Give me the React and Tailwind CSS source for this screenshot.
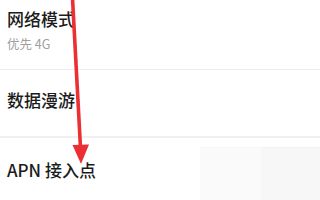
export default function App() {
  const font = { fontFamily: '"Noto Sans CJK SC", "Noto Sans", sans-serif' }
  return (
    <div className="relative w-[320px] h-[200px] overflow-hidden bg-white" style={font}>
      <div className="flex flex-col">
        <div className="h-[70px] border-b border-[#ececec] pl-[7px] pt-[9px]">
          <div className="text-[17px] leading-[20px] font-medium text-[#1c1c1c]">网络模式</div>
          <div className="mt-[7px] text-[12.5px] leading-[16px] text-[#a0a0a0]">优先 4G</div>
        </div>
        <div className="h-[68px] border-b-2 border-[#f0f0f0] pl-[7px] pt-[20px]">
          <div className="text-[17px] leading-[20px] font-medium text-[#1c1c1c]">数据漫游</div>
        </div>
        <div className="relative flex h-[62px] justify-between">
          <div className="pl-[7px] pt-[22px] text-[17px] leading-[20px] font-medium text-[#1c1c1c]">APN 接入点</div>
          <div className="mt-[9px] flex">
            <div className="w-[61px] h-[60px] bg-[#fafafa] border-t border-[#f6f6f6]" />
            <div className="w-[59px] h-[60px] bg-[#f7f7f7] border-t border-[#f3f3f3]" />
          </div>
        </div>
      </div>
      <svg className="absolute left-0 top-0" width="320" height="200" viewBox="0 0 320 200">
        <line x1="72.5" y1="-2" x2="80.5" y2="148" stroke="#ec2f35" strokeWidth="3.6" />
        <polygon points="72.5,145 89,144.5 81,164" fill="#ec2f35" />
      </svg>
    </div>
  )
}
